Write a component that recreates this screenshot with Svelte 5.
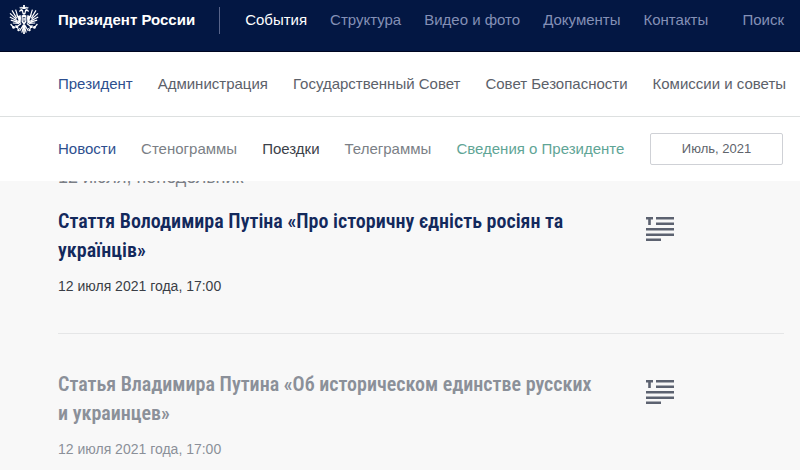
<script>
    const sections = ["События", "Структура", "Видео и фото", "Документы", "Контакты"];
    const institutions = ["Президент", "Администрация", "Государственный Совет", "Совет Безопасности", "Комиссии и советы"];
    const topics = [
        { title: "Новости", tone: "current" },
        { title: "Стенограммы", tone: "muted" },
        { title: "Поездки", tone: "dark" },
        { title: "Телеграммы", tone: "muted" },
        { title: "Сведения о Президенте", tone: "green" }
    ];
    const articles = [
        { title: "Стаття Володимира Путіна «Про історичну єдність росіян та українців»", date: "12 июля 2021 года, 17:00", visited: false },
        { title: "Статья Владимира Путина «Об историческом единстве русских и украинцев»", date: "12 июля 2021 года, 17:00", visited: true }
    ];
</script>

{#snippet halfEagle()}
    <path d="M15 9.5 L13.6 9.2 L13 6.6 L12.2 6 L10 7 L10.6 5 L12.6 4 L14 5 L14.4 7.6 L15 8 Z" />
    <path d="M10.8 3.4 L10.6 1.8 L11.6 2.4 L12.2 1.4 L12.8 2.4 L13.6 2 L13.2 3.6 Z" />
    <path d="M11.6 10 L9 11 L7 9 L9.6 15.6 L8 15.4 L9.4 18 L11.6 18.6 L12 13 Z" />
    <path d="M8.8 11.6 L6.6 4.6 M7.6 13 L3 5.4 M7.6 14.4 L1 8.4 M8.4 16 L.8 12 M9.2 17.4 L1.8 15.2 M10.2 18.4 L3.8 18" class="feather" />
    <path d="M15 9.6 L12.6 10.4 L12.6 17 L15 20 L15 17.6 L13.8 16 L13.8 12 L15 12 Z" />
    <path d="M12.2 18.4 L8.8 21 L6.4 22.6 M8.8 21 L6.2 20.8 M8.8 21 L8.6 23.8" class="feather" />
    <path d="M14.6 19.6 L10.6 26 M15 20 L12.8 27.6 M15 19.8 L15 29" class="feather" />
    <path d="M1.6 19 L4.4 22.4" class="feather" />
    <circle cx="4.6" cy="22.4" r="1.4" />
    <path d="M10.8 23.4 L8.8 25 L10 26" class="feather" />
{/snippet}

<div class="top">
    <header>
        <a class="logo" href="#home">
            <svg width="30" height="30" viewBox="0 0 30 30" aria-hidden="true">
                <g>{@render halfEagle()}</g>
                <g transform="matrix(-1 0 0 1 30 0)">{@render halfEagle()}</g>
                <path d="M15 0 L15 2 M14 .8 L16 .8" class="feather" />
                <path d="M13.4 4 L13 2.4 L14.2 1.6 L15.8 1.6 L17 2.4 L16.6 4 Z" />
                <path d="M15 12.6 L15 16.4 M14.2 14 L16 14" class="feather" />
            </svg>
            <span>Президент России</span>
        </a>
        <nav class="sections">
            {#each sections as section, i}
                <a href="#section-{i}" class:active={i === 0}>{section}</a>
            {/each}
        </nav>
        <a class="search" href="#search">Поиск</a>
    </header>

    <nav class="row institutions">
        {#each institutions as institution, i}
            <a href="#institution-{i}" class:current={i === 0}>{institution}</a>
        {/each}
    </nav>

    <div class="row filters">
        <nav>
            {#each topics as topic, i}
                <a href="#topic-{i}" class={topic.tone}>{topic.title}</a>
            {/each}
        </nav>
        <button type="button">Июль, 2021</button>
    </div>
</div>

<main>
    <h2>12 июля, понедельник</h2>
    {#each articles as article}
        <article class:visited={article.visited}>
            <div class="text">
                <h3><a href="#article">{article.title}</a></h3>
                <time>{article.date}</time>
            </div>
            <svg width="28" height="24" viewBox="0 0 28 24" aria-hidden="true">
                <path d="M0 0 H7 V2.5 H4.8 V8 H2.2 V2.5 H0 Z M10 0 H28 V2.5 H10 Z M10 5.5 H28 V8 H10 Z M0 11 H28 V13.5 H0 Z M0 16.5 H28 V19 H0 Z M0 21.5 H15 V24 H0 Z" />
            </svg>
        </article>
    {/each}
</main>

<style>
    :global(body) {
        margin: 0;
        background: #f8f8f8;
        font-family: "Liberation Sans", Arial, sans-serif;
        font-size: 15px;
        line-height: 20px;
    }

    a {
        color: inherit;
        text-decoration: none;
        white-space: nowrap;
    }

    .top {
        position: sticky;
        top: 0;
        z-index: 1;
        background: white;
    }

    header {
        display: flex;
        align-items: flex-start;
        box-sizing: border-box;
        height: 52px;
        padding: 5px 16px 0 9px;
        background: #031743;
        border-bottom: 1px solid #000622;
        color: #8490b6;
    }

    .logo {
        display: flex;
        align-items: center;
        gap: 19px;
        color: white;
        font-weight: bold;
    }

    .logo svg {
        fill: white;
        stroke: none;
    }

    .feather {
        fill: none;
        stroke: white;
        stroke-width: 1.2;
    }

    .sections {
        display: flex;
        gap: 23px;
        margin: 2px 0 0 24px;
        padding: 3px 0 4px 25px;
        border-left: 1px solid #58648a;
    }

    .active {
        color: white;
    }

    .search {
        margin: 5px 0 0 auto;
    }

    .row {
        display: flex;
        align-items: center;
        box-sizing: border-box;
        padding-left: 58px;
        color: #5c616a;
    }

    .institutions {
        height: 65px;
        gap: 25px;
        border-bottom: 1px solid #dde0e0;
    }

    .filters {
        height: 64px;
        padding-right: 17px;
        justify-content: space-between;
    }

    .filters nav {
        display: flex;
        gap: 25px;
    }

    .current {
        color: #2d4f8f;
    }

    .muted {
        color: #7b7f86;
    }

    .dark {
        color: #3c4149;
    }

    .green {
        color: #5fa596;
    }

    button {
        width: 133px;
        height: 32px;
        padding: 0 0 2px;
        border: 1px solid #cfd1d6;
        border-radius: 2px;
        background: white;
        color: #60646c;
        font-family: inherit;
        font-size: 13px;
    }

    main {
        padding: 0 16px 0 58px;
        margin-top: -16px;
    }

    h2 {
        margin: 0 0 1px;
        color: #7b7f86;
        font-size: 18px;
        font-weight: normal;
        line-height: 24px;
    }

    article {
        display: flex;
        align-items: flex-start;
        justify-content: space-between;
        padding: 17px 110px 37px 0;
        border-bottom: 1px solid #e5e6e7;
    }

    article + article {
        padding-top: 36px;
    }

    article:last-child {
        padding-bottom: 0;
        border-bottom: none;
    }

    .text {
        width: 540px;
    }

    article svg {
        flex: none;
        margin-top: 10px;
        fill: #5c6270;
    }

    h3 {
        margin: 0 0 11px;
        color: #13295c;
        font-family: "Roboto Condensed", Roboto, sans-serif;
        font-size: 20px;
        font-weight: 600;
        line-height: 29px;
    }

    h3 a {
        white-space: normal;
    }

    time {
        display: block;
        color: #3a3e46;
        font-size: 14px;
    }

    .visited h3,
    .visited time {
        color: #8b9099;
    }
</style>
